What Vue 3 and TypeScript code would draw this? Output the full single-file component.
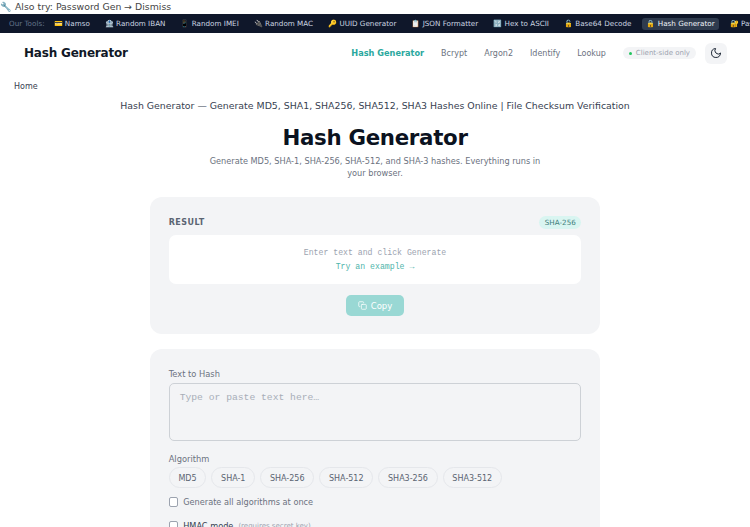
<script setup lang="ts">
const tools = [
  { icon: '💳', name: 'Namso' },
  { icon: '🏦', name: 'Random IBAN' },
  { icon: '📱', name: 'Random IMEI' },
  { icon: '🔌', name: 'Random MAC' },
  { icon: '🔑', name: 'UUID Generator' },
  { icon: '📋', name: 'JSON Formatter' },
  { icon: '🔢', name: 'Hex to ASCII' },
  { icon: '🔓', name: 'Base64 Decode' },
  { icon: '🔒', name: 'Hash Generator', active: true },
  { icon: '🔐', name: 'Password Generator' },
]
const navLinks = ['Bcrypt', 'Argon2', 'Identify', 'Lookup']
const algos = ['MD5', 'SHA-1', 'SHA-256', 'SHA-512', 'SHA3-256', 'SHA3-512']
</script>

<template>
  <div class="page">
    <div class="promo">🔧 Also try: Password Gen → Dismiss</div>
    <div class="tools">
      <span class="tools-label">Our Tools:</span>
      <span v-for="t in tools" :key="t.name" class="tool" :class="{ active: t.active }">{{ t.icon }} {{ t.name }}</span>
    </div>
    <header class="header">
      <div class="logo">Hash Generator</div>
      <nav class="nav">
        <span class="nav-active">Hash Generator</span>
        <span v-for="l in navLinks" :key="l" class="nav-link">{{ l }}</span>
        <span class="client"><i class="dot"></i>Client-side only</span>
        <span class="theme">
          <svg width="12" height="12" viewBox="0 0 24 24" fill="none" stroke="#1f2937" stroke-width="2" stroke-linecap="round" stroke-linejoin="round"><path d="M21 12.79A9 9 0 1 1 11.21 3 7 7 0 0 0 21 12.79z"/></svg>
        </span>
      </nav>
    </header>
    <div class="crumb">Home</div>
    <div class="seo">Hash Generator — Generate MD5, SHA1, SHA256, SHA512, SHA3 Hashes Online | File Checksum Verification</div>
    <h1 class="title">Hash Generator</h1>
    <p class="sub">Generate MD5, SHA-1, SHA-256, SHA-512, and SHA-3 hashes. Everything runs in your browser.</p>

    <section class="card result">
      <div class="result-head">
        <span class="result-label">RESULT</span>
        <span class="badge">SHA-256</span>
      </div>
      <div class="result-box">
        <div class="hint">Enter text and click Generate</div>
        <div class="example">Try an example →</div>
      </div>
      <div class="copy-row">
        <button class="copy">
          <svg width="9" height="9" viewBox="0 0 24 24" fill="none" stroke="#fff" stroke-width="2" stroke-linecap="round" stroke-linejoin="round"><rect x="9" y="9" width="13" height="13" rx="2"/><path d="M5 15H4a2 2 0 0 1-2-2V4a2 2 0 0 1 2-2h9a2 2 0 0 1 2 2v1"/></svg>
          Copy
        </button>
      </div>
    </section>

    <section class="card form">
      <label class="field-label">Text to Hash</label>
      <textarea class="input" placeholder="Type or paste text here…"></textarea>
      <label class="field-label algo-label">Algorithm</label>
      <div class="algos">
        <span v-for="a in algos" :key="a" class="algo">{{ a }}</span>
      </div>
      <label class="check"><input type="checkbox" />Generate all algorithms at once</label>
      <label class="check hmac"><input type="checkbox" /><span class="hmac-text">HMAC mode</span> <small>(requires secret key)</small></label>
    </section>
  </div>
</template>

<style>
html, body { margin: 0; overflow: hidden; background: #fff; }
</style>

<style scoped>
.page { width: 750px; height: 527px; overflow: hidden; font-family: "DejaVu Sans", sans-serif; color: #0f172a; background: #fff; }
.promo { height: 14px; font-size: 9.33px; line-height: 13px; color: #444; white-space: nowrap; }
.tools { height: 19px; background: #0f172a; display: flex; align-items: center; gap: 7px; padding: 0 0 0 9px; font-size: 7.2px; white-space: nowrap; overflow: hidden; }
.tools-label { color: #64748b; margin-right: -2px; }
.tool { color: #cbd5e1; font-weight: 500; padding: 1.5px 4px; border-radius: 3px; flex: none; }
.tool.active { background: #2f3b4e; color: #f1f5f9; }
.header { height: 40px; display: flex; align-items: center; justify-content: space-between; padding: 0 23px 0 24px; }
.logo { font-size: 12px; font-weight: 700; letter-spacing: -0.2px; color: #111827; }
.nav { display: flex; align-items: center; gap: 17px; font-size: 8px; color: #6b7280; }
.nav-active { color: #2aa89e; font-weight: 700; font-size: 8.2px; }
.client { display: flex; align-items: center; gap: 4px; background: #f3f4f6; color: #9ca3af; font-size: 7px; padding: 2px 6px; border-radius: 99px; }
.dot { width: 3px; height: 3px; border-radius: 50%; background: #22c55e; }
.theme { width: 22px; height: 21px; border-radius: 6px; background: #f3f4f6; display: flex; align-items: center; justify-content: center; margin-left: -8px; }
.crumb { font-size: 8px; line-height: 11px; color: #374151; padding: 8px 14px 0; }
.seo { text-align: center; font-size: 9.4px; line-height: 14px; color: #374151; margin-top: 7px; }
.title { margin: 11px 0 0; text-align: center; font-size: 21.33px; line-height: 28px; font-weight: 700; letter-spacing: -0.3px; color: #0b1220; }
.sub { margin: 3px auto 0; width: 340px; text-align: center; font-size: 8.2px; line-height: 12px; color: #6b7280; }
.card { width: 450px; box-sizing: border-box; margin: 0 auto; background: #f3f4f6; border-radius: 12px; padding: 19px 18.67px; }
.result { margin-top: 18px; height: 137px; }
.result-head { display: flex; justify-content: space-between; align-items: center; height: 13px; }
.result-label { font-size: 8px; font-weight: 700; letter-spacing: 0.5px; color: #5b6472; }
.badge { background: #d9f5f1; color: #3f7f7c; font-size: 7.2px; padding: 2px 5.5px; border-radius: 99px; }
.result-box { margin-top: 6px; height: 49px; background: #fff; border-radius: 7px; box-sizing: border-box; text-align: center; font-family: "Liberation Mono", monospace; font-size: 8.2px; line-height: 14px; padding-top: 11px; }
.hint { color: #9ca3af; }
.example { color: #4fb5ab; }
.copy-row { display: flex; justify-content: center; margin-top: 11px; }
.copy { width: 58px; height: 21px; border: 0; border-radius: 5px; background: #99d8d4; color: #fff; font: 8.5px "DejaVu Sans", sans-serif; display: flex; align-items: center; justify-content: center; gap: 4px; padding: 0; }
.form { margin-top: 15px; height: 200px; }
.field-label { display: block; font-size: 8.3px; line-height: 12px; color: #6b7280; }
.input { display: block; width: 100%; height: 58px; margin-top: 3px; box-sizing: border-box; border: 1.33px solid #cdd1d6; border-radius: 5px; background: #f3f4f6; padding: 8px 10px; resize: none; font-family: "Liberation Mono", monospace; font-size: 9.7px; outline: none; }
.input::placeholder { color: #a8aeb8; }
.algo-label { margin-top: 12px; }
.algos { display: flex; gap: 5px; margin-top: 2px; }
.algo { height: 21px; line-height: 21px; box-sizing: border-box; padding: 0 8.75px; border: 1px solid #e5e7eb; border-radius: 99px; font-size: 8px; color: #5b6472; }
.check { display: flex; align-items: center; gap: 5px; font-size: 8.2px; color: #6b7280; margin-top: 8px; height: 12px; }
.check input { margin: 0; width: 9.5px; height: 9.5px; appearance: none; border: 1px solid #9ca3af; border-radius: 2px; background: #fff; }
.hmac { margin-top: 12px; }
.hmac-text { color: #374151; }
.check small { font-size: 7px; color: #9ca3af; }
</style>
